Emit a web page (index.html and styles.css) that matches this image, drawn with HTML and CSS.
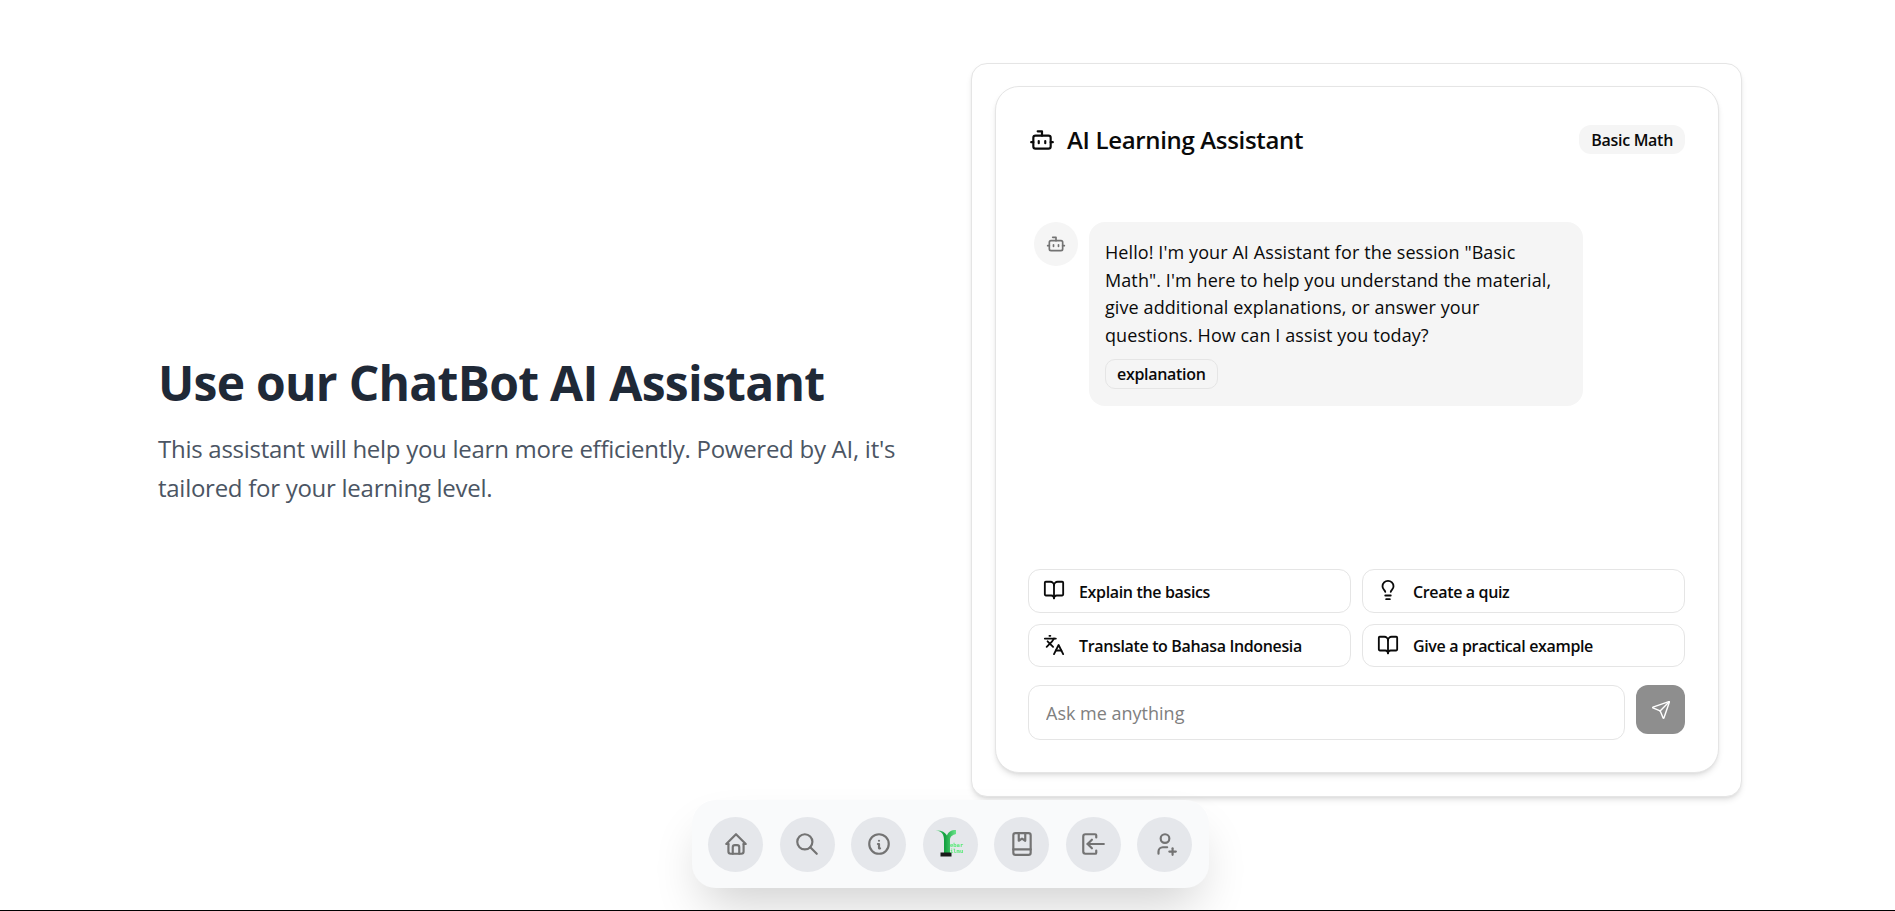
FILE: index.html
```html
<!DOCTYPE html>
<html lang="en">
<head>
  <meta charset="UTF-8">
  <title>ChatBot AI Assistant</title>
  <link rel="stylesheet" href="styles.css">
</head>
<body>
<svg class="sprites" width="0" height="0">
  <defs>
    <linearGradient id="leaf" x1="0" x2="1" y1="0" y2="0">
      <stop offset="0" stop-color="#4fdc74"/>
      <stop offset="0.45" stop-color="#12a03f"/>
      <stop offset="1" stop-color="#6be58a"/>
    </linearGradient>
  </defs>
  <symbol id="bot" viewBox="0 0 24 24"><path d="M12 8V4H8"/><rect width="16" height="12" x="4" y="8" rx="2"/><path d="M2 14h2"/><path d="M20 14h2"/><path d="M15 13v2"/><path d="M9 13v2"/></symbol>
  <symbol id="book" viewBox="0 0 24 24"><path d="M12 7v14"/><path d="M3 18a1 1 0 0 1-1-1V4a1 1 0 0 1 1-1h5a4 4 0 0 1 4 4 4 4 0 0 1 4-4h5a1 1 0 0 1 1 1v13a1 1 0 0 1-1 1h-6a3 3 0 0 0-3 3 3 3 0 0 0-3-3z"/></symbol>
  <symbol id="bulb" viewBox="0 0 24 24"><path d="M15 14c.2-1 .7-1.7 1.5-2.5 1-.9 1.5-2.2 1.5-3.5A6 6 0 0 0 6 8c0 1 .2 2.2 1.5 3.5.7.7 1.3 1.5 1.5 2.5"/><path d="M9 18h6"/><path d="M10 22h4"/></symbol>
  <symbol id="lang" viewBox="0 0 24 24"><path d="m5 8 6 6"/><path d="m4 14 6-6 2-3"/><path d="M2 5h12"/><path d="M7 2h1"/><path d="m22 22-5-10-5 10"/><path d="M14 18h6"/></symbol>
</svg>

<main class="page">
  <section class="intro">
    <h1>Use our ChatBot AI Assistant</h1>
    <p>This assistant will help you learn more efficiently. Powered by AI, it's tailored for your learning level.</p>
  </section>

  <section class="frame">
    <div class="chat">
      <header class="chat-head">
        <h2><svg class="icon icon-title"><use href="#bot"/></svg>AI Learning Assistant</h2>
        <span class="session">Basic Math</span>
      </header>

      <div class="messages">
        <div class="avatar"><svg class="icon icon-avatar"><use href="#bot"/></svg></div>
        <div class="bubble">
          <p>Hello! I'm your AI Assistant for the session "Basic Math". I'm here to help you understand the material, give additional explanations, or answer your questions. How can I assist you today?</p>
          <span class="tag">explanation</span>
        </div>
      </div>

      <div class="prompts">
        <button class="prompt"><svg class="icon"><use href="#book"/></svg>Explain the basics</button>
        <button class="prompt"><svg class="icon"><use href="#bulb"/></svg>Create a quiz</button>
        <button class="prompt"><svg class="icon"><use href="#lang"/></svg>Translate to Bahasa Indonesia</button>
        <button class="prompt"><svg class="icon"><use href="#book"/></svg>Give a practical example</button>
      </div>

      <form class="ask">
        <input type="text" placeholder="Ask me anything">
        <button type="button" class="send">
          <svg class="icon icon-send" viewBox="0 0 24 24"><path d="M14.536 21.686a.5.5 0 0 0 .937-.024l6.5-19a.496.496 0 0 0-.635-.635l-19 6.5a.5.5 0 0 0-.024.937l7.93 3.18a2 2 0 0 1 1.112 1.11z"/><path d="m21.854 2.147-10.94 10.939"/></svg>
        </button>
      </form>
    </div>
  </section>
</main>

<nav class="dock">
  <a class="dock-item"><svg class="dock-icon" viewBox="0 0 24 24"><path d="M5 12H3l9-9 9 9h-2"/><path d="M5 12v7a2 2 0 0 0 2 2h10a2 2 0 0 0 2-2v-7"/><path d="M9 21v-6a2 2 0 0 1 2-2h2a2 2 0 0 1 2 2v6"/></svg></a>
  <a class="dock-item"><svg class="dock-icon" viewBox="0 0 24 24"><circle cx="10" cy="10" r="7"/><path d="m21 21-6-6"/></svg></a>
  <a class="dock-item"><svg class="dock-icon" viewBox="0 0 24 24"><circle cx="12" cy="12" r="9"/><path d="M12 9h.01"/><path d="M11 12h1v4h1"/></svg></a>
  <a class="dock-item"><svg class="logo" viewBox="0 0 36 36">
    <path d="M3.500 4.500C9 4.500 12 8 12 14v13h6V14c0-3.500 2.500-5 6-6V4c-5 0-8 2-9 5.500-2-3.500-6-5.500-11.500-5z" fill="url(#leaf)"/>
    <rect x="8.500" y="26.500" width="11" height="4" fill="#1a1a1a"/>
    <text x="18" y="20.500" class="logo-text">ebar</text>
    <text x="18" y="26.500" class="logo-text">ilmu</text>
  </svg></a>
  <a class="dock-item"><svg class="dock-icon" viewBox="0 0 24 24"><rect x="4" y="2" width="16" height="20" rx="2"/><path d="M4 17h16"/><path d="M9 2v7l3-2 3 2V2"/></svg></a>
  <a class="dock-item"><svg class="dock-icon" viewBox="0 0 24 24"><path d="M15 6V4a1 1 0 0 0-1-1H5a2 2 0 0 0-2 2v14a2 2 0 0 0 2 2h9a1 1 0 0 0 1-1v-2"/><path d="M22 12H7l4-4"/><path d="m7 12 4 4"/></svg></a>
  <a class="dock-item"><svg class="dock-icon" viewBox="0 0 24 24"><circle cx="12" cy="7" r="4"/><path d="M16 19h6"/><path d="M19 16v6"/><path d="M6 21v-2a4 4 0 0 1 4-4h4"/></svg></a>
</nav>

<div class="baseline"></div>
</body>
</html>
```

FILE: styles.css
```css
* { box-sizing: border-box; }
html, body { margin: 0; padding: 0; height: 100%; overflow: hidden; }
body { font-family: "Open Sans", "Noto Sans", Arial, sans-serif; background: #fff; color: #0a0a0a; }
.sprites { display: block; height: 0; }

.page { display: grid; grid-template-columns: 971px 771px; height: 911px; padding-top: 63px; align-items: start; }
.intro { padding: 290px 0 0 158px; }
.intro h1 { margin: 0 0 17px; font-size: 48px; line-height: 60px; font-weight: 700; color: #1f2937; letter-spacing: -0.73px; }
.intro p { margin: 0; width: 760px; font-size: 24px; line-height: 38.5px; color: #4b5563; letter-spacing: -0.27px; }

.icon { width: 24px; height: 24px; fill: none; stroke: currentColor; stroke-width: 2; stroke-linecap: round; stroke-linejoin: round; flex-shrink: 0; }
.frame { height: 734px; padding: 22px 22.5px 23px 23px; border: 1px solid #e5e5e5; border-radius: 16px; background: #fff; box-shadow: 0 4px 6px -1px rgba(0,0,0,.1), 0 2px 4px -2px rgba(0,0,0,.1); }
.chat { height: 687px; padding: 32px 32.5px 32px 32px; border: 1px solid #e5e5e5; border-radius: 24px; background: #fff; box-shadow: 0 4px 6px -1px rgba(0,0,0,.1), 0 2px 4px -2px rgba(0,0,0,.1); display: flex; flex-direction: column; }

.chat-head { display: flex; justify-content: space-between; align-items: center; height: 35px; margin-top: 3px; }
.chat-head h2 { margin: 0; display: flex; align-items: center; gap: 12px; font-size: 24px; font-weight: 600; letter-spacing: -0.33px; }
.icon-title { width: 26px; height: 26px; margin-left: 1px; }
.session { padding: 5px 12px 3px; height: 29px; font-size: 16px; font-weight: 600; line-height: 21px; background: #f5f5f5; border-radius: 12px; letter-spacing: -0.3px; }

.messages { display: flex; gap: 11px; padding: 65px 0 0 6px; flex: 1; align-items: flex-start; }
.avatar { width: 44px; height: 44px; border-radius: 50%; background: #f5f5f5; display: flex; align-items: center; justify-content: center; color: #737373; }
.icon-avatar { width: 20px; height: 20px; }
.bubble { width: 494px; padding: 17px 28px 17px 16px; background: #f5f5f5; border-radius: 16px; }
.bubble p { margin: 0 0 10px; font-size: 18px; line-height: 27.5px; letter-spacing: 0.09px; }
.tag { display: block; width: fit-content; height: 30px; padding: 0 11px; border: 1px solid #e5e5e5; border-radius: 10px; font-size: 16px; line-height: 29.5px; font-weight: 600; letter-spacing: -0.3px; }

.prompts { display: grid; grid-template-columns: 1fr 1fr; gap: 11px; }
.prompt { height: 43.5px; display: flex; align-items: center; gap: 14px; padding: 2px 14px 0; border: 1px solid #e5e5e5; border-radius: 12px; background: #fff; color: #0a0a0a; font-family: inherit; font-size: 16px; font-weight: 600; letter-spacing: -0.35px; text-align: left; }
.prompt .icon { width: 22px; height: 22px; margin-top: -3px; }

.ask { display: flex; gap: 11px; margin-top: 18px; height: 55px; margin-bottom: 0; align-items: flex-start; }
.ask input { flex: 1; min-width: 0; height: 55px; padding: 0 17px; border: 1px solid #e5e5e5; border-radius: 12px; font-family: inherit; font-size: 18px; outline: none; }
.ask input::placeholder { color: #808080; }
.send { width: 49px; height: 49px; padding: 0; border: 0; border-radius: 12px; background: #8e8e8e; color: #fff; display: flex; align-items: center; justify-content: center; }
.icon-send { width: 20px; height: 20px; stroke-width: 1.7; }

/* floating nav */
.dock { position: fixed; left: 692px; top: 800px; width: 517px; height: 88px; padding: 0 16px; display: flex; gap: 16.5px; align-items: center; background: #f9fafb; border-radius: 24px; box-shadow: 0 25px 50px -12px rgba(0,0,0,.2); }
.dock-item { width: 55px; height: 55px; border-radius: 50%; background: #e5e7eb; display: flex; align-items: center; justify-content: center; }
.dock-icon { width: 26px; height: 26px; fill: none; stroke: #737373; stroke-width: 2; stroke-linecap: round; stroke-linejoin: round; }
.logo { width: 36px; height: 36px; }
.logo-text { font-family: "DejaVu Sans Mono", monospace; font-size: 5.5px; font-weight: 700; fill: #55ea75; }

.baseline { position: fixed; left: 0; right: 0; bottom: 0; height: 1px; background: #000; }
```
